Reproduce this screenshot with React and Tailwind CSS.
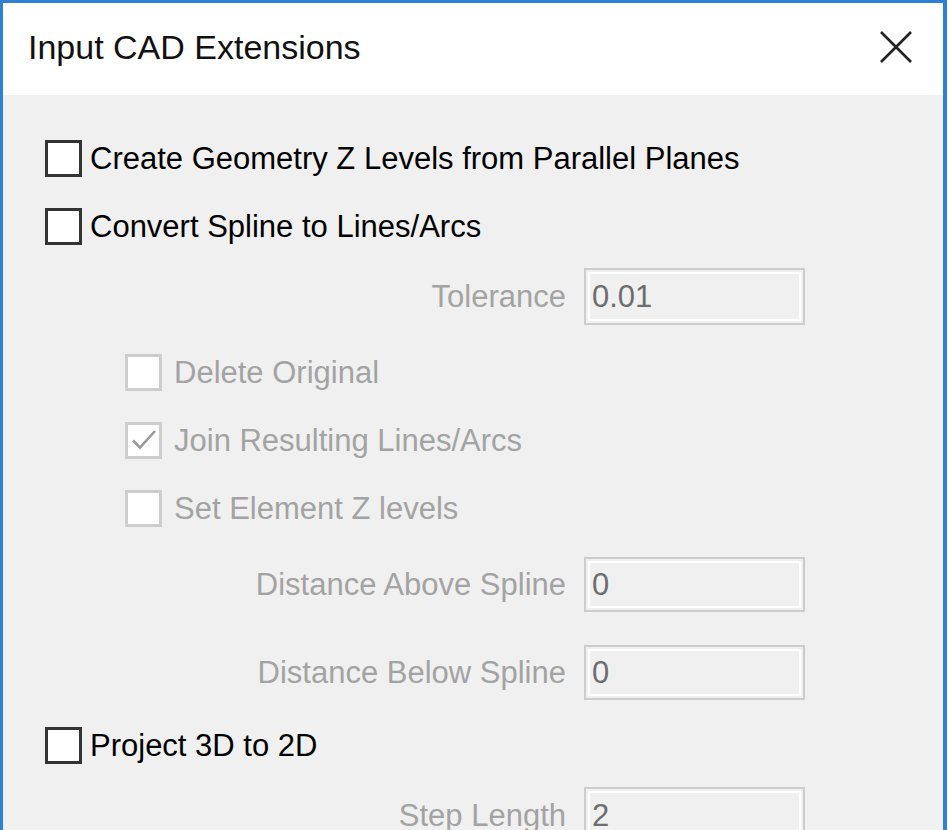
import React from 'react'

const font = { fontFamily: '"Liberation Sans", Arial, sans-serif' }

const Box = ({ disabled, checked }) => (
    <div
        className={`w-[37px] h-[37px] shrink-0 bg-white border-[3px] flex items-center justify-center ${disabled ? 'border-[#cdcdcd]' : 'border-[#333333]'}`}
    >
        {checked && (
            <svg className="w-[30px] h-[30px]" viewBox="0 0 30 30" fill="none">
                <path d="M4 15.5l7 7L26 6" stroke="#9a9a9a" strokeWidth="2.6" />
            </svg>
        )}
    </div>
)

const CheckRow = ({ label, disabled, checked, indent }) => (
    <div className={`h-[68px] flex items-center ${indent ? 'pl-[122px]' : 'pl-[42px]'}`}>
        <Box disabled={disabled} checked={checked} />
        <span className={`text-[31px] leading-none ${disabled ? 'ml-[12px] text-[#a3a3a3]' : 'ml-[8px] text-black'}`}>
            {label}
        </span>
    </div>
)

const FieldRow = ({ label, value, className }) => (
    <div className={`flex items-center ${className}`}>
        <div className="w-[563px] text-right text-[31px] leading-none text-[#a3a3a3]">{label}</div>
        <div className="ml-[18px] w-[221px] h-full border-2 border-[#cccccc] p-[2px]">
            <div className="w-full h-full border-2 border-white bg-[#f0f0f0] flex items-center pl-[2px] text-[31px] leading-none text-[#6d6d6d]">
                {value}
            </div>
        </div>
    </div>
)

const App = () => {
    return (
        <div className="w-[948px] h-[830px] overflow-hidden bg-white" style={font}>
            <div className="w-[947px] h-[900px] border-t-[3px] border-l-[3px] border-r-[4px] border-[#2f7fd4] flex flex-col">
                {/* Title bar */}
                <div className="h-[92px] bg-white flex items-center justify-between pl-[25px] pr-[30px]">
                    <span className="text-[34px] text-[#111] pb-[4px]">Input CAD Extensions</span>
                    <svg className="w-[34px] h-[34px] mb-[4px]" viewBox="0 0 34 34" fill="none">
                        <path d="M2 2l30 30M32 2L2 32" stroke="#222" strokeWidth="2.6" />
                    </svg>
                </div>

                {/* Body */}
                <div className="flex-1 bg-[#f0f0f0] pt-[29px]">
                    <CheckRow label="Create Geometry Z Levels from Parallel Planes" />
                    <CheckRow label="Convert Spline to Lines/Arcs" />
                    <FieldRow label="Tolerance" value="0.01" className="mt-[8px] h-[57px]" />
                    <div className="mt-[13px]">
                        <CheckRow label="Delete Original" disabled indent />
                        <CheckRow label="Join Resulting Lines/Arcs" disabled checked indent />
                        <CheckRow label="Set Element Z levels" disabled indent />
                    </div>
                    <FieldRow label="Distance Above Spline" value="0" className="mt-[15px] h-[55px]" />
                    <FieldRow label="Distance Below Spline" value="0" className="mt-[33px] h-[55px]" />
                    <div className="mt-[11px]">
                        <CheckRow label="Project 3D to 2D" />
                    </div>
                    <FieldRow label="Step Length" value="2" className="mt-[8px] h-[57px]" />
                </div>
            </div>
        </div>
    )
}

export default App
